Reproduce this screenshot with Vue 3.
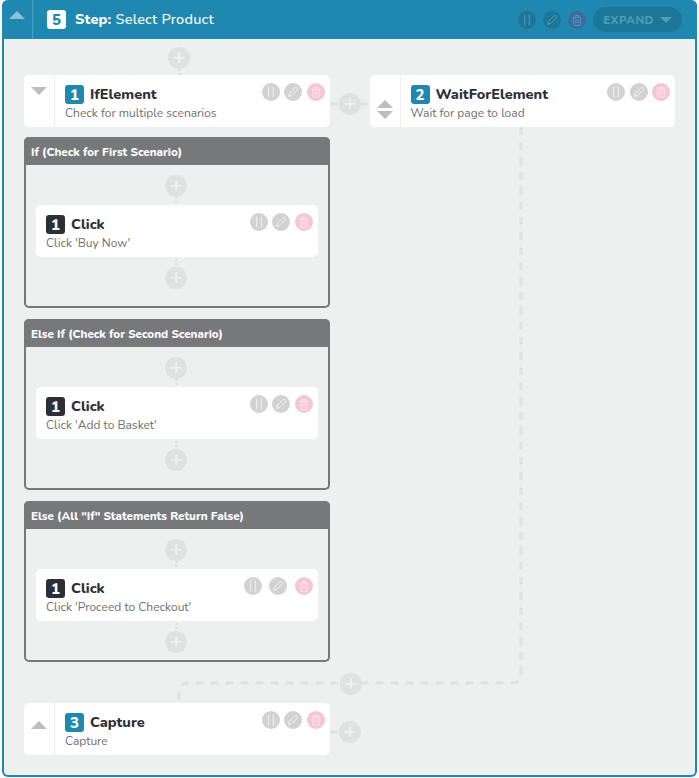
<template>
  <div class="page">
    <svg width="0" height="0" class="defs">
      <symbol id="i-pause" viewBox="0 0 18 18"><path d="M6.7 3.5v11M11.3 3.5v11" /></symbol>
      <symbol id="i-edit" viewBox="0 0 18 18"><path d="M4.6 13.4l.9-3.2 5.6-5.6a1.1 1.1 0 0 1 1.6 0l.7.7a1.1 1.1 0 0 1 0 1.6l-5.6 5.6z" /></symbol>
      <symbol id="i-trash" viewBox="0 0 18 18"><path d="M5.6 6.3v7a1 1 0 0 0 1 1h4.8a1 1 0 0 0 1-1v-7M4.8 6.3h8.4M7.2 6.3V4.6h3.6v1.7M7.9 8.2v4.2M10.1 8.2v4.2" /></symbol>
    </svg>

    <section class="panel">
      <header class="panel-head">
        <div class="head-arrow"><span class="tri up head-tri"></span></div>
        <span class="badge white">5</span>
        <h1 class="head-title"><b>Step:</b> Select Product</h1>
        <div class="head-actions">
          <button class="act dark"><svg><use href="#i-pause" /></svg></button>
          <button class="act dark"><svg><use href="#i-edit" /></svg></button>
          <button class="act dark-del"><svg><use href="#i-trash" /></svg></button>
          <button class="expand">EXPAND<span class="tri down expand-tri"></span></button>
        </div>
      </header>

      <div class="flow">
        <div class="col">
          <div class="plus stub-down top-plus"></div>

          <div class="card">
            <div class="side"><span class="tri down"></span></div>
            <div class="card-main">
              <div class="card-title"><span class="badge blue">1</span>IfElement</div>
              <div class="card-sub">Check for multiple scenarios</div>
            </div>
            <div class="actions">
              <button class="act"><svg><use href="#i-pause" /></svg></button>
              <button class="act"><svg><use href="#i-edit" /></svg></button>
              <button class="act del"><svg><use href="#i-trash" /></svg></button>
            </div>
          </div>

          <div class="branches">
            <div v-for="b in branches" :key="b.title" class="branch" :class="{ short: b.short }">
              <div class="branch-head">{{ b.title }}</div>
              <div class="branch-body">
                <div class="plus stub-down"></div>
                <div class="card inner">
                  <div class="card-main">
                    <div class="card-title"><span class="badge black">1</span>Click</div>
                    <div class="card-sub">{{ b.sub }}</div>
                  </div>
                  <div class="actions" :class="{ wide: b.short }">
                    <button class="act"><svg><use href="#i-pause" /></svg></button>
                    <button class="act"><svg><use href="#i-edit" /></svg></button>
                    <button class="act del"><svg><use href="#i-trash" /></svg></button>
                  </div>
                </div>
                <div class="plus stub-up"></div>
              </div>
            </div>
          </div>

          <div class="card capture">
            <div class="side"><span class="tri up"></span></div>
            <div class="card-main">
              <div class="card-title"><span class="badge blue">3</span>Capture</div>
              <div class="card-sub">Capture</div>
            </div>
            <div class="actions">
              <button class="act"><svg><use href="#i-pause" /></svg></button>
              <button class="act"><svg><use href="#i-edit" /></svg></button>
              <button class="act del"><svg><use href="#i-trash" /></svg></button>
            </div>
          </div>
        </div>

        <div class="col right">
          <div class="card">
            <div class="side updown"><span class="tri up"></span><span class="tri down"></span></div>
            <div class="card-main">
              <div class="card-title"><span class="badge blue">2</span>WaitForElement</div>
              <div class="card-sub">Wait for page to load</div>
            </div>
            <div class="actions">
              <button class="act"><svg><use href="#i-pause" /></svg></button>
              <button class="act"><svg><use href="#i-edit" /></svg></button>
              <button class="act del"><svg><use href="#i-trash" /></svg></button>
            </div>
          </div>
        </div>
      </div>
    </section>

    <!-- connectors between the steps -->
    <svg class="wires" width="699" height="778">
      <path d="M330 104H370M330 732H340" />
      <path d="M521 127V674Q521 683 512 683H188Q179 683 179 692V703" />
    </svg>
    <div v-for="(p, i) in floatingPlus" :key="i" class="plus floating" :style="{ left: p.x + 'px', top: p.y + 'px' }"></div>
  </div>
</template>

<script setup>
const branches = [
  { title: 'If (Check for First Scenario)', sub: "Click 'Buy Now'" },
  { title: 'Else If (Check for Second Scenario)', sub: "Click 'Add to Basket'" },
  { title: 'Else (All "If" Statements Return False)', sub: "Click 'Proceed to Checkout'", short: true }
]

const floatingPlus = [
  { x: 339, y: 93 },
  { x: 340, y: 673 },
  { x: 339, y: 721 }
]
</script>

<style>
html,
body {
  margin: 0;
  background: #fff;
}
</style>

<style scoped>
.page {
  position: relative;
  width: 699px;
  height: 778px;
  overflow: hidden;
  font-family: "Nunito", "Lato", "Open Sans", sans-serif;
}

.defs {
  position: absolute;
}

.panel {
  box-sizing: border-box;
  width: 695px;
  height: 777px;
  margin-left: 2px;
  background: #eef0ef;
  border: 2px solid #1f88b0;
  border-top: 0;
  border-radius: 6px;
}

.panel-head {
  display: flex;
  align-items: center;
  height: 39px;
  margin: 0 -2px;
  background: #1f88b0;
  border-radius: 6px 6px 0 0;
  color: #fff;
}

.head-arrow {
  display: flex;
  justify-content: center;
  box-sizing: border-box;
  width: 31px;
  height: 39px;
  padding-top: 11px;
  margin-right: 14px;
  border-right: 1px solid #4b9fbf;
}

.head-title {
  margin: 0 0 2px 9px;
  font-size: 14.5px;
  font-weight: 500;
  letter-spacing: 0.2px;
}

.head-title b {
  font-weight: 800;
}

.head-actions {
  display: flex;
  align-items: center;
  gap: 7px;
  margin-left: auto;
  margin-right: 15px;
}

.badge {
  display: inline-flex;
  align-items: center;
  justify-content: center;
  width: 19px;
  height: 19px;
  border-radius: 3px;
  font-size: 15px;
  font-weight: 800;
}

.badge.white {
  background: #fff;
  color: #1f88b0;
}

.badge.blue {
  background: #1f88b0;
  color: #fff;
}

.badge.black {
  background: #2e2f36;
  color: #fff;
}

.tri {
  display: block;
  width: 0;
  height: 0;
  border-left: 8px solid transparent;
  border-right: 8px solid transparent;
}

.tri.up {
  border-bottom: 8px solid #bdbdbd;
}

.tri.down {
  border-top: 8px solid #bdbdbd;
}

.tri.head-tri {
  border-bottom-color: #8cc0d4;
}

.expand {
  display: flex;
  align-items: center;
  gap: 6px;
  height: 25px;
  padding: 0 10px;
  border: 0;
  border-radius: 13px;
  background: #1c7698;
  color: #4f9dba;
  font: 800 11.5px "Nunito", "Lato", "Open Sans", sans-serif;
  letter-spacing: 0.5px;
}

.tri.expand-tri {
  border-left-width: 6px;
  border-right-width: 6px;
  border-top: 6px solid #4f9dba;
}

.act {
  width: 18px;
  height: 18px;
  padding: 0;
  border: 0;
  border-radius: 50%;
  background: #d2d2d2;
}

.act svg {
  display: block;
  width: 18px;
  height: 18px;
  fill: none;
  stroke: #f4f4f4;
  stroke-width: 1;
}

.act.del {
  background: #f7c6d5;
}

.act.del svg {
  stroke: #fbe6ec;
}

.act.dark {
  background: #1c7698;
}

.act.dark-del {
  background: #3e6a9f;
}

.act.dark svg,
.act.dark-del svg {
  stroke: #4f9dba;
}

.flow {
  display: flex;
  gap: 40px;
  padding: 8px 20px 0;
}

.col {
  width: 306px;
}

.col.right {
  padding-top: 28px;
}

.card {
  position: relative;
  display: flex;
  height: 52px;
  background: #fff;
  border-radius: 5px;
}

.top-plus {
  margin: 0 0 6px 144px;
}

.side {
  display: flex;
  justify-content: center;
  box-sizing: border-box;
  width: 31px;
  padding-top: 12px;
  border-right: 1px solid #eef0ef;
}

.capture .side {
  padding-top: 18px;
}

.side.updown {
  flex-direction: column;
  align-items: center;
  gap: 3px;
  padding-top: 17px;
}

.card-main {
  padding: 10px 0 0 10px;
}

.card-title {
  display: flex;
  align-items: flex-start;
  gap: 6px;
  height: 19px;
  font-size: 14.5px;
  font-weight: 800;
  line-height: 18px;
  color: #2e2f36;
}

.card-sub {
  margin-top: 1px;
  font-size: 12px;
  line-height: 17px;
  color: #6f6f6f;
}

.actions {
  display: flex;
  gap: 4.5px;
  position: absolute;
  top: 8px;
  right: 5px;
}

.actions.wide {
  gap: 7.5px;
}

.branches {
  display: flex;
  flex-direction: column;
  gap: 11px;
  margin-top: 10px;
}

.branch {
  box-sizing: border-box;
  height: 171px;
  border: 2px solid #77787a;
  border-top: 0;
  border-radius: 5px;
}

.branch.short {
  height: 161px;
}

.branch-head {
  height: 28px;
  margin: 0 -2px;
  padding-left: 7px;
  background: #77787a;
  border-radius: 5px 5px 0 0;
  color: #fff;
  font-size: 11.6px;
  font-weight: 800;
  line-height: 30px;
}

.branch-body {
  display: flex;
  flex-direction: column;
  padding: 10px 10px 0;
}

.branch-body .plus {
  align-self: center;
  margin-left: -1px;
}

.card.inner {
  margin: 8px 0 10px;
}

.capture {
  margin-top: 41px;
}

.plus {
  position: relative;
  width: 22px;
  height: 22px;
  border-radius: 50%;
  background: #e0e1e1;
}

.plus::before {
  content: '+';
  position: absolute;
  inset: 0;
  color: #f3f3f3;
  font: 400 22px/21px "Liberation Sans", sans-serif;
  text-align: center;
}

.plus.stub-down::after,
.plus.stub-up::after {
  content: '';
  position: absolute;
  left: 10px;
  width: 3px;
  height: 8px;
  background: repeating-linear-gradient(180deg, #e0e1e1 0 2px, transparent 2px 4px);
}

.plus.stub-down::after {
  top: 22px;
}

.plus.stub-up::after {
  bottom: 22px;
}

.wires {
  position: absolute;
  left: 0;
  top: 0;
  pointer-events: none;
}

.wires path {
  fill: none;
  stroke: #e0e1e1;
  stroke-width: 3;
  stroke-dasharray: 8 7;
}

.floating {
  position: absolute;
}
</style>
